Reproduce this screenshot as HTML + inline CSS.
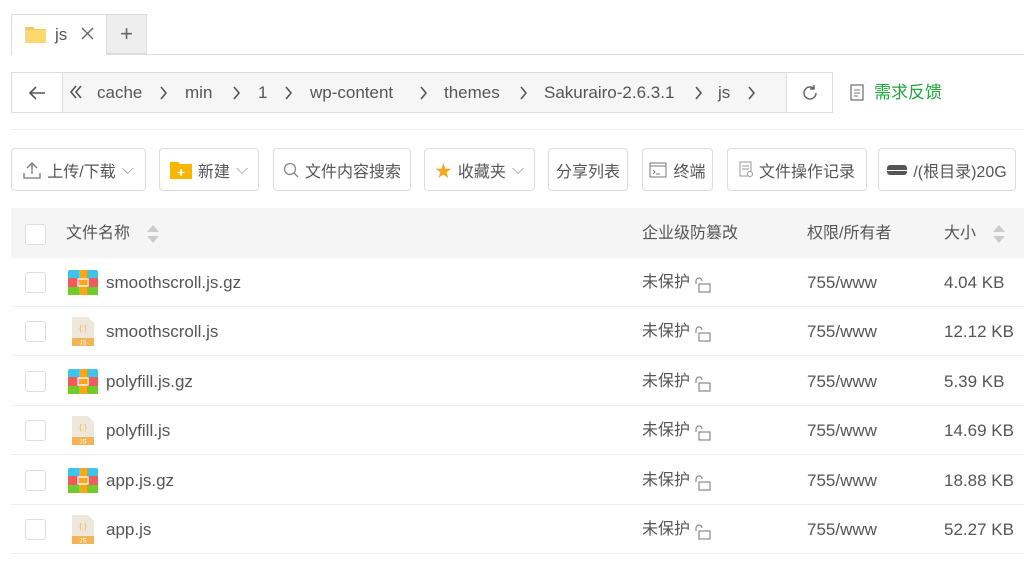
<!DOCTYPE html>
<html><head><meta charset="utf-8"><style>
*{box-sizing:border-box;margin:0;padding:0}
body{width:1024px;height:561px;overflow:hidden;background:#fff;font-family:"Liberation Sans","Noto Sans CJK SC",sans-serif;color:#555;font-size:16px;position:relative}
.a{position:absolute}
.tabline{left:11px;right:0;top:54px;height:1px;background:#ddd}
.tab{left:11px;top:14px;width:96px;height:41px;background:#fff;border:1px solid #ddd;border-bottom:none}
.plus{left:106px;top:14px;width:41px;height:40px;background:#eee;border:1px solid #ddd;text-align:center;line-height:38px;font-size:22px;color:#666}
.bc{left:11px;top:72px;width:822px;height:41px;border:1px solid #ddd;background:#f6f6f6}
.back{left:11px;top:72px;width:52px;height:41px;border:1px solid #ddd;background:#fff}
.ref{left:786px;top:72px;width:47px;height:41px;border:1px solid #ddd;background:#fff}
.sep{left:11px;right:0;top:129px;height:1px;background:#eee}
.btn{top:148px;height:43px;border:1px solid #ddd;border-radius:4px;background:#fff;display:flex;align-items:center;justify-content:center;gap:6px;font-size:16px;color:#555}
.head{left:11px;right:0;top:208px;height:50px;background:#f5f5f5}
.cb{width:21px;height:21px;border:1px solid #ddd;border-radius:3px;background:#fff;left:25px}
.line{left:11px;right:0;height:1px;background:#eee}
.t{line-height:20px}
.bt{top:83px;font-size:17px}
</style></head><body>
<div class="a tabline"></div>
<div class="a tab"></div>
<svg class="a" style="left:25px;top:25px" width="21" height="18"><path d="M0 2h8l2 2h11v14H0z" fill="#f7c85a"/><rect x="0" y="5" width="21" height="13" fill="#fcd96f"/></svg>
<div class="a t" style="left:55px;top:25px;font-size:17px">js</div>
<svg class="a" style="left:81px;top:27px" width="13" height="13"><path d="M1 1l11 11M12 1L1 12" stroke="#666" stroke-width="1.4"/></svg>
<div class="a plus">+</div>

<div class="a bc"></div>
<div class="a back"></div>
<svg class="a" style="left:28px;top:85px" width="18" height="16"><path d="M17 8H2M8 2L2 8l6 6" fill="none" stroke="#555" stroke-width="1.6"/></svg>
<svg class="a" style="left:69px;top:85px" width="14" height="14"><path d="M7 1L2 7l5 6M12 1L7 7l5 6" fill="none" stroke="#555" stroke-width="1.6"/></svg>
<div class="a t bt" style="left:97px">cache</div>
<div class="a t bt" style="left:185px">min</div>
<div class="a t bt" style="left:258px">1</div>
<div class="a t bt" style="left:310px">wp-content</div>
<div class="a t bt" style="left:444px">themes</div>
<div class="a t bt" style="left:544px">Sakurairo-2.6.3.1</div>
<div class="a t bt" style="left:718px">js</div>
<svg class="a" style="left:0;top:85px" width="800" height="16"><g fill="none" stroke="#555" stroke-width="1.6"><path d="M161 2l5 6-5 6M234 2l5 6-5 6M286 2l5 6-5 6M421 2l5 6-5 6M521 2l5 6-5 6M696 2l5 6-5 6M749 2l5 6-5 6"/></g></svg>
<div class="a ref"></div>
<svg class="a" style="left:801px;top:84px" width="18" height="18"><path d="M15 9a6 6 0 1 1-2-4.5M13 1v4h-4" fill="none" stroke="#666" stroke-width="1.5"/></svg>
<svg class="a" style="left:850px;top:83px" width="16" height="18"><rect x="1" y="2" width="12" height="15" fill="none" stroke="#777" stroke-width="1.3"/><path d="M4 7h6M4 10h6M4 13h4" stroke="#777"/></svg>
<div class="a t" style="left:874px;top:83px;color:#20a53a;font-size:17px">需求反馈</div>
<div class="a sep"></div>

<div class="a btn" style="left:11px;width:135px"><svg width="18" height="18"><path d="M9 13V2M4 7l5-5 5 5M1 12v5h16v-5" fill="none" stroke="#777" stroke-width="1.3"/></svg>上传/下载 <span style="color:#999">⌵</span></div>
<div class="a btn" style="left:159px;width:100px"><svg width="22" height="18"><path d="M0 1h8l2 2h12v15H0z" fill="#f8b600"/><path d="M11 8v7M7.5 11.5h7" stroke="#fff" stroke-width="1.5"/></svg>新建 <span style="color:#999">⌵</span></div>
<div class="a btn" style="left:273px;width:138px"><svg width="16" height="16"><circle cx="7" cy="7" r="5.5" fill="none" stroke="#888" stroke-width="1.3"/><path d="M11 11l4 4" stroke="#888" stroke-width="1.3"/></svg>文件内容搜索</div>
<div class="a btn" style="left:424px;width:111px"><span style="color:#f5a623;font-size:17px">★</span>收藏夹 <span style="color:#999">⌵</span></div>
<div class="a btn" style="left:548px;width:80px">分享列表</div>
<div class="a btn" style="left:642px;width:71px"><svg width="18" height="16"><rect x="1" y="1" width="16" height="14" fill="none" stroke="#777"/><path d="M1 4h16M4 8l2 2-2 2M7 12h4" stroke="#777" fill="none"/></svg>终端</div>
<div class="a btn" style="left:727px;width:140px"><svg width="14" height="17"><rect x="1" y="1" width="11" height="14" fill="none" stroke="#999"/><path d="M3 5h7M3 8h7" stroke="#999"/><circle cx="11" cy="13" r="2.5" fill="#fff" stroke="#999"/></svg>文件操作记录</div>
<div class="a btn" style="left:878px;width:138px"><svg width="20" height="12"><rect x="0" y="1" width="20" height="10" rx="3" fill="#555"/><rect x="0" y="6" width="20" height="1" fill="#fff"/></svg>/(根目录)20G</div>

<div class="a head"></div>
<div class="a cb" style="top:224px"></div>
<div class="a t" style="left:66px;top:224px">文件名称</div>
<svg class="a" style="left:146px;top:224px" width="14" height="20"><path d="M7 1l6 7H1zM7 19l6-7H1z" fill="#ccc"/></svg>
<div class="a t" style="left:642px;top:224px">企业级防篡改</div>
<div class="a t" style="left:807px;top:224px">权限/所有者</div>
<div class="a t" style="left:944px;top:224px">大小</div>
<svg class="a" style="left:992px;top:224px" width="14" height="20"><path d="M7 1l6 7H1zM7 19l6-7H1z" fill="#ccc"/></svg>

<div id="rows"></div>
<script>
var d=[["smoothscroll.js.gz","4.04 KB",1],["smoothscroll.js","12.12 KB",0],["polyfill.js.gz","5.39 KB",1],["polyfill.js","14.69 KB",0],["app.js.gz","18.88 KB",1],["app.js","52.27 KB",0]];
var h="";
d.forEach(function(r,i){var y=258+i*49.4;
h+='<div class="a cb" style="top:'+(y+14)+'px"></div>';
if(r[2])h+='<svg class="a" style="left:68px;top:'+(y+12)+'px" width="30" height="25"><rect width="30" height="25" rx="2" fill="#3ec3ea"/><rect y="8" width="30" height="9" fill="#f25b5b"/><rect y="17" width="30" height="8" fill="#6fcc2a"/><rect x="11" width="8" height="25" fill="#f8a81b"/><rect x="10" y="9" width="10" height="7" fill="none" stroke="#fff" stroke-width="1.3"/></svg>';
else h+='<svg class="a" style="left:72px;top:'+(y+10)+'px" width="22" height="29"><path d="M0 0h16l6 6v23H0z" fill="#eee8dc"/><rect y="21" width="22" height="8" fill="#f0b45a"/><text x="11" y="27.5" font-size="6" fill="#fff" text-anchor="middle" font-family="Liberation Sans">JS</text><text x="11" y="14" font-size="8" fill="#f0b45a" text-anchor="middle" font-family="Liberation Sans">{:}</text></svg>';
h+='<div class="a t" style="left:106px;top:'+(y+15)+'px;font-size:17px">'+r[0]+'</div>';
h+='<div class="a t" style="left:642px;top:'+(y+15)+'px">未保护</div><svg class="a" style="left:694px;top:'+(y+19)+'px" width="18" height="16"><path d="M2 7V4a3 3 0 0 1 6 0" fill="none" stroke="#888" stroke-width="1.2"/><rect x="5" y="7" width="11" height="8" fill="none" stroke="#888" stroke-width="1.2"/></svg>';
h+='<div class="a t" style="left:807px;top:'+(y+15)+'px;font-size:17px">755/www</div>';
h+='<div class="a t" style="left:944px;top:'+(y+15)+'px;font-size:17px">'+r[1]+'</div>';
h+='<div class="a line" style="top:'+(y+48)+'px"></div>';});
document.getElementById("rows").innerHTML=h;
</script>
</body></html>
